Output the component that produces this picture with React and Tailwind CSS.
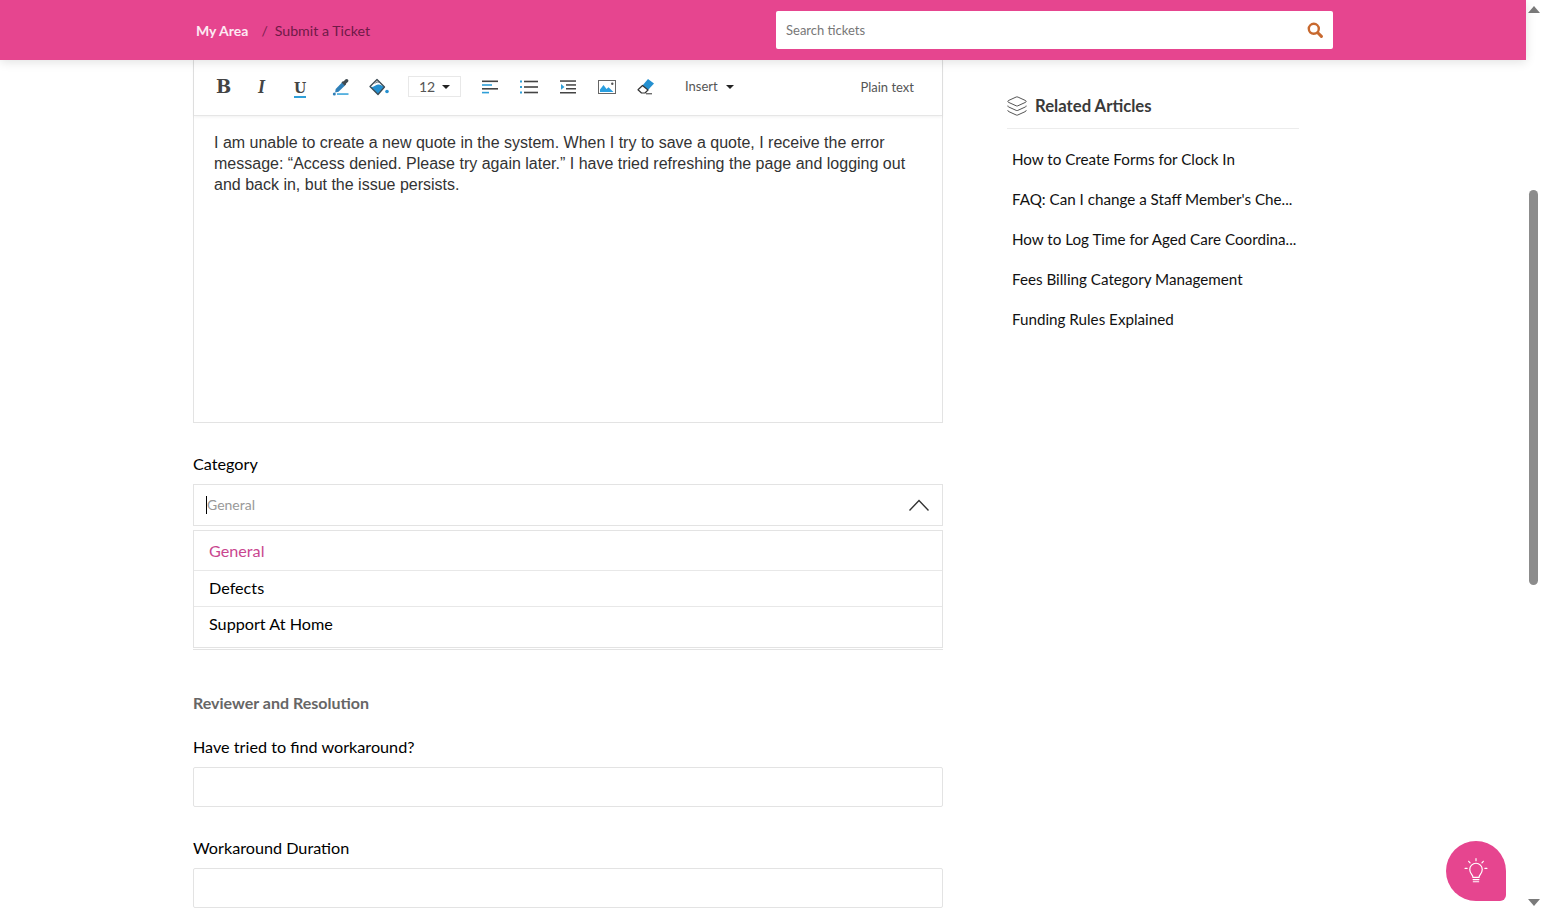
import { Layers } from 'lucide-react'

const articles = [
  'How to Create Forms for Clock In',
  "FAQ: Can I change a Staff Member's Che...",
  'How to Log Time for Aged Care Coordina...',
  'Fees Billing Category Management',
  'Funding Rules Explained',
]

function Caret() {
  return <span className="inline-block w-0 h-0 border-x-[4px] border-x-transparent border-t-[4px] border-t-[#222]" />
}

function SearchIcon() {
  return (
    <svg width="16" height="16" viewBox="0 0 16 16" fill="none" stroke="#c8692f" strokeLinecap="round">
      <circle cx="6.800" cy="6.800" r="5" strokeWidth="2.400" />
      <path d="M10.800 10.800l3.600 3.600" strokeWidth="3" />
    </svg>
  )
}

function ChevronIcon() {
  return (
    <svg width="20" height="12" viewBox="0 0 20 12" fill="none" stroke="#333" strokeWidth="1.400">
      <path d="M0.500 11.500L10 1.500l9.500 10" />
    </svg>
  )
}

function BulbIcon() {
  return (
    <svg width="26" height="28" viewBox="0 0 24 26" fill="none" stroke="#fff" strokeWidth="1.100" strokeLinecap="round">
      <path d="M9.200 19c0-2.400-3-3.600-3-7.400a5.800 5.800 0 0 1 11.600 0c0 3.800-3 5-3 7.400z" />
      <path d="M9.300 21h5.400M9.500 23h5M12 1.500v2M5.200 4l1.300 1.500M18.800 4l-1.300 1.500M1.800 10.500h2M20.200 10.500h2" />
    </svg>
  )
}

function PipetteIcon() {
  return (
    <svg width="18" height="18" viewBox="0 0 18 18">
      <path d="M10 4.500l3 3-6.500 6.300-3.400.6.600-3.400z" fill="#2f7fb8" />
      <path d="M9.500 4.500l1.300-1.200 1-.1 1.500-1.700c.8-.8 2-.8 2.600 0 .7.700.6 1.800-.1 2.500l-1.700 1.500-.1 1 -1.300 1.300z" fill="#3f4a50" />
      <circle cx="2.300" cy="16" r="1.500" fill="#2f7fb8" />
      <rect x="5" y="15.300" width="11.500" height="1.500" fill="#2f9fd8" />
    </svg>
  )
}

function BucketIcon() {
  return (
    <svg width="20" height="18" viewBox="0 0 20 18">
      <path d="M1 8.500L8 1.500l7.500 7.500-6.500 7.500z" fill="#fff" />
      <path d="M1 8.500c4 1.500 5-1.500 8-2 2.500-.3 4.500 1.500 6.500 2.500L9 16.500z" fill="#2590d0" />
      <path d="M8 1.500l7.500 7.500-6.500 7.500L1 8.500z" fill="none" stroke="#3c4a52" strokeWidth="1.300" strokeLinejoin="round" />
      <path d="M6 5.500c1-1.500 2.500-2 3.500-1" fill="none" stroke="#3c4a52" strokeWidth="1" />
      <circle cx="18" cy="13.500" r="1.800" fill="#2590d0" />
    </svg>
  )
}

function AlignIcon() {
  return (
    <svg width="16" height="14" viewBox="0 0 16 14">
      <rect y="0.500" width="16" height="1.600" fill="#444" />
      <rect y="4.200" width="10" height="1.600" fill="#2f9fd8" />
      <rect y="8" width="16" height="1.600" fill="#444" />
      <rect y="11.800" width="7" height="1.600" fill="#2f9fd8" />
    </svg>
  )
}

function ListIcon() {
  return (
    <svg width="18" height="14" viewBox="0 0 18 14">
      <rect x="0" y="0.500" width="2" height="2" fill="#2f9fd8" />
      <rect x="0" y="6" width="2" height="2" fill="#2f9fd8" />
      <rect x="0" y="11.500" width="2" height="2" fill="#2f9fd8" />
      <rect x="4" y="0.700" width="14" height="1.600" fill="#444" />
      <rect x="4" y="6.200" width="14" height="1.600" fill="#444" />
      <rect x="4" y="11.700" width="14" height="1.600" fill="#444" />
    </svg>
  )
}

function IndentIcon() {
  return (
    <svg width="16" height="14" viewBox="0 0 16 14">
      <rect y="0.300" width="16" height="1.500" fill="#444" />
      <rect x="6" y="4.200" width="10" height="1.500" fill="#444" />
      <rect x="6" y="8" width="10" height="1.500" fill="#444" />
      <rect y="12" width="16" height="1.500" fill="#444" />
      <path d="M1 4l3.500 2.900L1 9.800z" fill="#2f9fd8" />
    </svg>
  )
}

function ImageIcon() {
  return (
    <svg width="18" height="14" viewBox="0 0 18 14">
      <rect x="0.500" y="0.500" width="17" height="13" fill="#fff" stroke="#666" />
      <path d="M2 12V9.500l3.500-4.500 3 4 2-1.800 5 4.800z" fill="#2a9fe0" />
      <circle cx="14.300" cy="3.700" r="1.200" fill="#555" />
    </svg>
  )
}

function EraserIcon() {
  return (
    <svg width="18" height="17" viewBox="0 0 18 17">
      <path d="M11 1l6 4.500-6 6.500-5.500-4.500z" fill="#2590d0" />
      <path d="M5.500 7.500l5.500 4.500-3 3H4.500L1 11.800z" fill="#fff" stroke="#333" strokeWidth="1.200" strokeLinejoin="round" />
      <path d="M9 15.800h6" stroke="#333" strokeWidth="1" />
    </svg>
  )
}

function Scrollbar() {
  return (
    <div className="w-[15px] shrink-0 h-full bg-white flex flex-col items-center">
      <div className="h-[18px] flex items-center justify-center">
        <span className="w-0 h-0 border-x-[6px] border-x-transparent border-b-[7px] border-b-[#7a7a7a]" />
      </div>
      <div className="mt-[172px] w-[9px] h-[395px] rounded-[5px] bg-[#8c8c8c]" />
      <div className="flex-1" />
      <div className="h-[18px] flex items-center justify-center">
        <span className="w-0 h-0 border-x-[6px] border-x-transparent border-t-[7px] border-t-[#7a7a7a]" />
      </div>
    </div>
  )
}

export default function App() {
  return (
    <div className="w-full h-[911px] overflow-hidden flex bg-white text-black font-['Lato','Noto_Sans',sans-serif]">
      <div className="flex-1 min-w-0 h-full relative">
        {/* Top bar */}
        <header className="relative z-10 h-[60px] bg-[#e6458f] shadow-[0_2px_10px_rgba(0,0,0,0.12)] flex items-center pl-[196px]">
          <div className="flex items-center text-[14px] w-[580px] mt-px">
            <span className="font-bold text-[#fdeaf3]">My Area</span>
            <span className="ml-[13px] text-[#7a1f4f]">/</span>
            <span className="ml-[7px] text-[14.2px] text-[#6f1a47]">Submit a Ticket</span>
          </div>
          <div className="w-[557px] h-[38px] bg-white rounded-[2px] flex items-center justify-between pl-[10px] pr-[10px]">
            <span className="text-[13px] text-[#777] mt-px">Search tickets</span>
            <SearchIcon />
          </div>
        </header>

        <div className="flex pl-[193px]">
          {/* Ticket form */}
          <main className="w-[750px] shrink-0">
            <div className="border-x border-b border-[#e3e3e3] h-[363px]">
              <div className="h-[56px] bg-white border-b border-[#e6e6e6] shadow-[0_1px_3px_rgba(0,0,0,0.06)] flex items-center pl-[22px] pb-[2px] text-[#444]">
                <span className="w-[39px] text-[18px] font-bold leading-none font-['DejaVu_Serif',serif]">B</span>
                <span className="w-[39px] pl-[3px] text-[18px] font-bold italic leading-none font-['Liberation_Serif',serif]">I</span>
                <span className="w-[38px]">
                  <span className="inline-block text-[14px] font-bold leading-[16px] border-b-2 border-[#2f9fd8] font-['DejaVu_Serif',serif]">U</span>
                </span>
                <span className="w-[37px] flex"><PipetteIcon /></span>
                <span className="w-[39px] flex"><BucketIcon /></span>
                <span className="w-[53px] h-[21px] border border-[#e8e8e8] flex items-center justify-center gap-[7px] text-[14px] text-[#555]">
                  12 <Caret />
                </span>
                <span className="ml-[21px] w-[38px] flex"><AlignIcon /></span>
                <span className="w-[40px] flex"><ListIcon /></span>
                <span className="w-[38px] flex"><IndentIcon /></span>
                <span className="w-[39px] flex"><ImageIcon /></span>
                <span className="w-[39px] flex"><EraserIcon /></span>
                <span className="ml-[9px] flex items-center gap-[8px] text-[13px] text-[#555]">Insert <Caret /></span>
                <span className="ml-auto mr-[28px] mt-[2px] text-[13px] text-[#555]">Plain text</span>
              </div>
              <p className="px-[20px] pt-[16px] text-[16px] leading-[21px] text-[#333] font-['Liberation_Sans',sans-serif]">
                I am unable to create a new quote in the system. When I try to save a quote, I receive the error message: “Access denied. Please try again later.” I have tried refreshing the page and logging out and back in, but the issue persists.
              </p>
            </div>

            <label className="block mt-[31px] text-[16.2px] leading-5">Category</label>
            <div className="mt-[10px] h-[42px] border border-[#e3e3e3] flex items-center justify-between pl-[12px] pr-[13px]">
              <span className="text-[14px] text-[#999] border-l border-black leading-[18px]">General</span>
              <ChevronIcon />
            </div>
            <div className="mt-[4px] border-b border-[#e3e3e3] pb-[1px]">
              <ul className="border border-[#e3e3e3] text-[16.2px]">
                <li className="h-[40px] pl-[15px] pt-[1px] flex items-center border-b border-[#e8e8e8] text-[#c9468f]">General</li>
                <li className="h-[36px] pl-[15px] pb-[1px] flex items-center border-b border-[#e8e8e8]">Defects</li>
                <li className="h-[40px] pl-[15px] flex items-center pb-[6px]">Support At Home</li>
              </ul>
            </div>

            <h3 className="mt-[43px] text-[16px] leading-5 font-bold text-[#666]">Reviewer and Resolution</h3>
            <label className="block mt-[24px] text-[16.2px] leading-5">Have tried to find workaround?</label>
            <div className="mt-[10px] h-[40px] border border-[#e3e3e3] rounded-[2px]" />
            <label className="block mt-[31px] text-[16.2px] leading-5">Workaround Duration</label>
            <div className="mt-[10px] h-[40px] border border-[#e3e3e3] rounded-[2px]" />
          </main>

          {/* Related articles */}
          <aside className="ml-[64px] w-[292px] shrink-0">
            <div className="h-[69px] pt-[35px] border-b border-[#ececec] flex items-start gap-[7px]">
              <Layers size={22} strokeWidth={1} className="text-[#444] -ml-px" />
              <h2 className="mt-px text-[16.7px] leading-5 font-bold text-[#3a3a3a]">Related Articles</h2>
            </div>
            <ul className="pl-[5px] mt-[10px]">
              {articles.map((title) => (
                <li key={title} className="h-[40px] flex items-center text-[15.2px] text-[#111] whitespace-nowrap">
                  {title}
                </li>
              ))}
            </ul>
          </aside>
        </div>

        {/* Help button */}
        <button className="absolute left-[1446px] top-[841px] w-[60px] h-[60px] bg-[#e6458f] rounded-[30px_30px_6px_30px] flex items-center justify-center">
          <BulbIcon />
        </button>
      </div>
      <Scrollbar />
    </div>
  )
}
